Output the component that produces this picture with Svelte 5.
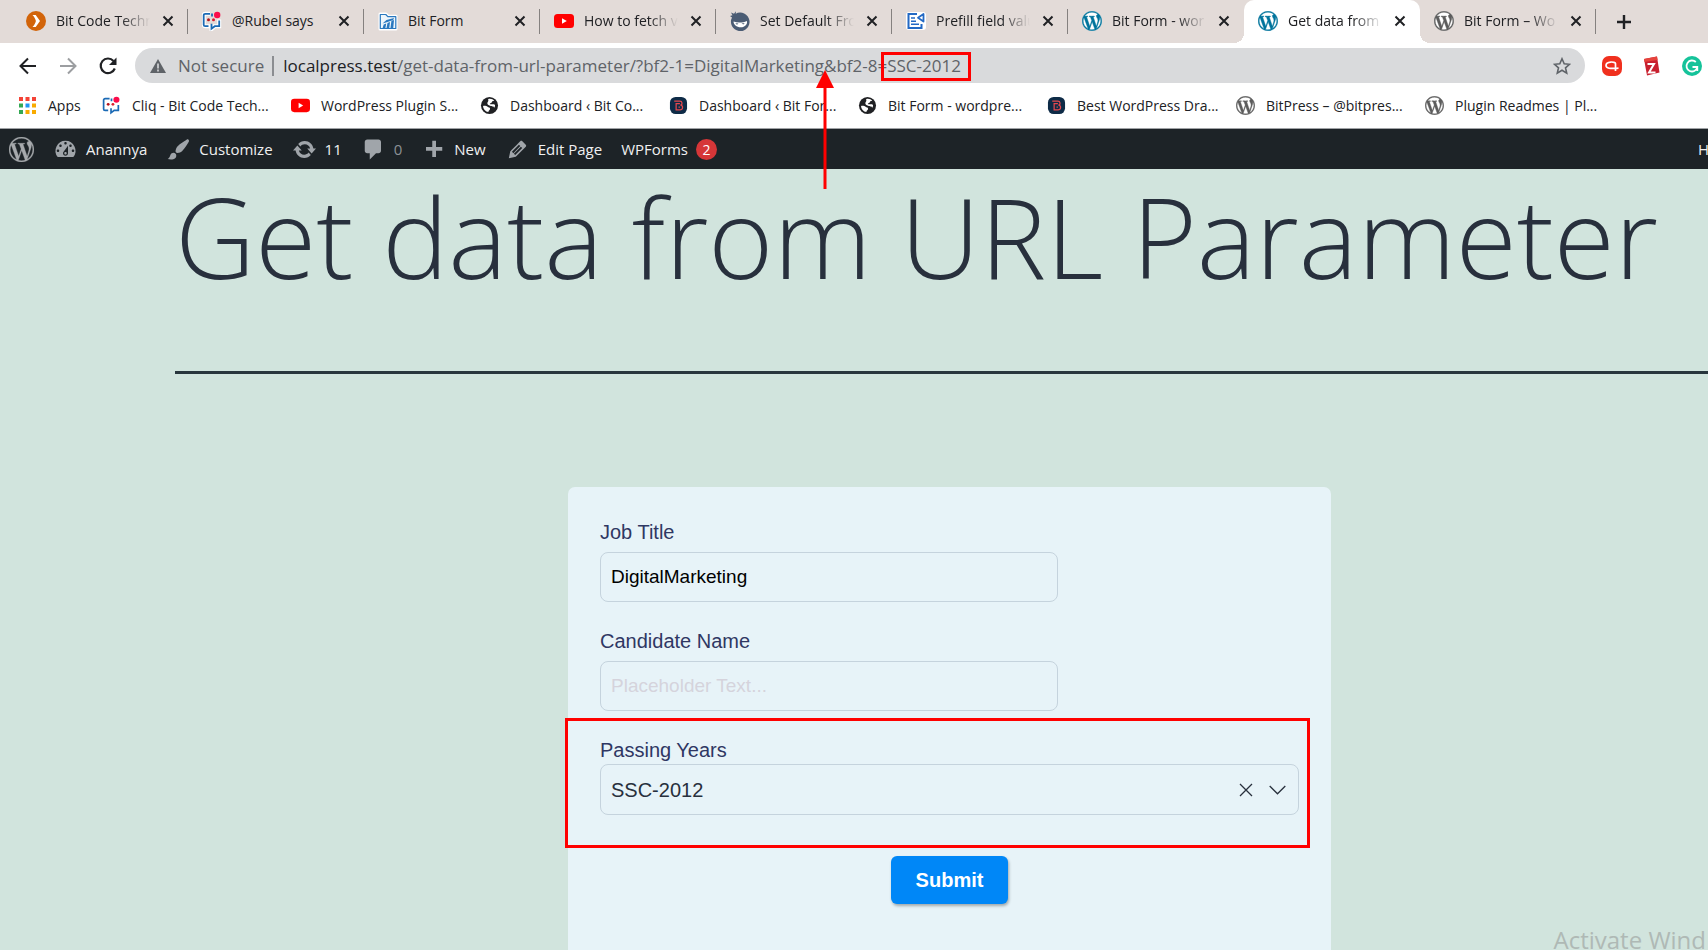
<script>
  const tabs = [
    { icon: 'arrow', label: 'Bit Code Techn', fade: true },
    { icon: 'cliq', label: '@Rubel says' },
    { icon: 'folder', label: 'Bit Form' },
    { icon: 'youtube', label: 'How to fetch v', fade: true },
    { icon: 'ninja', label: 'Set Default Fro', fade: true },
    { icon: 'prefill', label: 'Prefill field valu', fade: true },
    { icon: 'wpblue', label: 'Bit Form - wor', fade: true },
    { icon: 'wpblue', label: 'Get data from', fade: true, active: true },
    { icon: 'wpgray', label: 'Bit Form – Wo', fade: true },
  ];

  const bookmarks = [
    { icon: 'cliq', label: 'Cliq - Bit Code Tech...' },
    { icon: 'youtube', label: 'WordPress Plugin S...' },
    { icon: 'globe', label: 'Dashboard ‹ Bit Co...' },
    { icon: 'bitpress', label: 'Dashboard ‹ Bit For...' },
    { icon: 'globe', label: 'Bit Form - wordpre...' },
    { icon: 'bitpress', label: 'Best WordPress Dra...' },
    { icon: 'wpgray', label: 'BitPress – @bitpres...' },
    { icon: 'wpgray', label: 'Plugin Readmes | Pl...' },
  ];

  const dash = {
    gauge: 'M3.76 16h12.48A7.998 7.998 0 0 0 10 3a7.998 7.998 0 0 0-6.24 13zM10 4c.55 0 1 .45 1 1s-.45 1-1 1-1-.45-1-1 .45-1 1-1zM6 6c.55 0 1 .45 1 1s-.45 1-1 1-1-.45-1-1 .45-1 1-1zm8 0c.55 0 1 .45 1 1s-.45 1-1 1-1-.45-1-1 .45-1 1-1zm-5.37 5.55L12 7v6c0 1.1-.9 2-2 2s-2-.9-2-2c0-.57.24-1.08.63-1.45zM4 10c.55 0 1 .45 1 1s-.45 1-1 1-1-.45-1-1 .45-1 1-1zm12 0c.55 0 1 .45 1 1s-.45 1-1 1-1-.45-1-1 .45-1 1-1zm-5 3c0-.55-.45-1-1-1s-1 .45-1 1 .45 1 1 1 1-.45 1-1z',
    brush: 'M18.33 3.57s.27-.8-.31-1.36c-.53-.52-1.22-.24-1.22-.24-.61.3-5.76 3.47-7.67 5.57-.86.96-2.06 3.79-1.09 4.82.92.98 3.96-.17 4.79-1 2.06-2.06 5.21-7.17 5.5-7.79zM1.4 17.65c2.37-1.56 1.46-3.41 3.23-4.64.93-.65 2.22-.62 3.08.29.63.67.8 2.57-.16 3.46-1.57 1.45-4 1.55-6.15.89z',
    update: 'M10.2 3.28c3.53 0 6.43 2.61 6.92 6h2.08l-3.5 4-3.5-4h2.32c-.45-1.97-2.21-3.45-4.32-3.45-1.45 0-2.73.71-3.54 1.78L4.95 5.66C6.23 4.2 8.11 3.28 10.2 3.28zm-.4 13.44c-3.52 0-6.43-2.61-6.92-6H.8l3.5-4c1.17 1.33 2.33 2.67 3.5 4H5.48c.45 1.97 2.21 3.45 4.32 3.45 1.45 0 2.73-.71 3.54-1.78l1.71 1.95c-1.28 1.46-3.15 2.38-5.25 2.38z',
    comment: 'M5 2h9c1.1 0 2 .9 2 2v7c0 1.1-.9 2-2 2h-2l-5 5v-5H5c-1.1 0-2-.9-2-2V4c0-1.1.9-2 2-2z',
    plus: 'M17 8v3h-5v5H9v-5H4V8h5V3h3v5h5z',
    edit: 'M13.89 3.39l2.71 2.72c.46.46.42 1.24.03 1.64l-8.01 8.02-5.56 1.16 1.16-5.58s7.6-7.63 7.99-8.03c.39-.39 1.22-.39 1.68.07zm-2.73 2.79l-5.59 5.61 1.11 1.11 5.54-5.65zm-2.97 8.23l5.58-5.6-1.07-1.08-5.59 5.6z',
  };

  const adminItems = [
    { icon: 'gauge', label: 'Anannya' },
    { icon: 'brush', label: 'Customize' },
    { icon: 'update', label: '11' },
    { icon: 'comment', label: '0', dim: true },
    { icon: 'plus', label: 'New' },
    { icon: 'edit', label: 'Edit Page' },
  ];

  const wpPath =
    'M21.469 6.825c.84 1.537 1.318 3.3 1.318 5.175 0 3.979-2.156 7.456-5.363 9.325l3.295-9.527c.615-1.54.82-2.771.82-3.864 0-.405-.026-.78-.07-1.11m-7.981.105c.647-.03 1.232-.105 1.232-.105.582-.075.514-.93-.067-.899 0 0-1.755.135-2.88.135-1.064 0-2.85-.15-2.85-.15-.585-.03-.661.855-.075.885 0 0 .54.061 1.125.09l1.68 4.605-2.37 7.08L5.354 6.9c.649-.03 1.234-.1 1.234-.1.585-.075.516-.93-.065-.896 0 0-1.746.138-2.874.138-.2 0-.438-.008-.69-.015C4.911 3.15 8.235 1.215 12 1.215c2.809 0 5.365 1.072 7.286 2.833-.046-.003-.091-.009-.141-.009-1.06 0-1.812.923-1.812 1.914 0 .89.513 1.643 1.06 2.531.411.72.89 1.643.89 2.977 0 .915-.354 1.994-.821 3.479l-1.075 3.585-3.9-11.61.001.014zM12 22.784c-1.059 0-2.081-.153-3.048-.437l3.237-9.406 3.315 9.087c.024.053.05.101.078.149-1.12.393-2.325.609-3.582.609M1.211 12c0-1.564.336-3.05.935-4.39L7.29 21.709C3.694 19.96 1.212 16.271 1.211 12M12 0C5.385 0 0 5.385 0 12s5.385 12 12 12 12-5.385 12-12S18.615 0 12 0';

  const appColors = ['#f44336', '#f44336', '#f44336', '#34a853', '#2196f3', '#f9ab00', '#34a853', '#f9ab00', '#f9ab00'];

  let jobTitle = $state('DigitalMarketing');
  let candidate = $state('');
  let year = $state('SSC-2012');
</script>

{#snippet siteIcon(name)}
  <svg class="site-icon" viewBox="0 0 20 20" aria-hidden="true">
    {#if name === 'arrow'}
      <circle cx="10" cy="10" r="10" fill="#d2640a" />
      <path d="M6.500 4h3.200l4.300 6-4.300 6H6.500c1.600-1.800 2.800-3.600 3.400-6-.6-2.400-1.800-4.200-3.400-6z" fill="#fff" />
    {:else if name === 'cliq'}
      <path d="M8 2.800H3.200a1.500 1.500 0 0 0-1.500 1.500v9.400a1.500 1.500 0 0 0 1.500 1.500H8M12 15.200h-2.500v3l3.500-3h4.200V8.500" fill="none" stroke="#fff" stroke-width="4" />
      <path d="M8 2.800H3.200a1.500 1.500 0 0 0-1.500 1.500v9.400a1.500 1.500 0 0 0 1.500 1.500H6.500M9.500 12.800v4.900l3.300-2.500h4.400V9.500M10 2.600v2.800" fill="none" stroke="#1b6ab5" stroke-width="1.800" />
      <circle cx="6.500" cy="8.800" r="1.500" fill="#b5121b" />
      <circle cx="11.500" cy="8.800" r="1.500" fill="#d81e2c" />
      <circle cx="15.200" cy="4" r="3.200" fill="#fb0c4b" />
    {:else if name === 'folder'}
      <path d="M2 3h6l2 2.200h8V18H2z" fill="#fff" stroke="#fff" stroke-width="3" stroke-linejoin="round" />
      <path d="M2.300 17.500V3.500h5.500l2 2.200h8V17.500z" fill="#eef6fc" stroke="#2a78bf" stroke-width="1.200" stroke-linejoin="round" />
      <path d="M4.500 17.500l1.200-4 2.500-1-.9 5zM8.400 17.500l1.100-5.500 2.500-1-.8 6.500zM12.400 17.500l1-7.500 2.600-1-.8 8.500zM4.500 12.500l4-3.500 7.500-2-.8 2L9.500 11z" fill="#2a78bf" />
    {:else if name === 'youtube'}
      <rect x="0" y="3" width="20" height="14" rx="3.500" fill="#f00" />
      <path d="M8 7.200v5.600l4.800-2.800z" fill="#fff" />
    {:else if name === 'ninja'}
      <path d="M1 1.500l3 1.200L6 .2l-.3 2.500A9.300 9.300 0 1 1 2 6.500L0 5l2.500-.8z" fill="#4b5c74" />
      <path d="M3.600 10.400c3.800 1.500 9 1.500 13.200-.5 1.200 2.800-1.800 6.300-6 6.300s-7.600-3-7.200-5.800z" fill="#fff" />
      <path d="M5.300 12.200l3.200.2-1.500 1.300zM11.500 12.400l3.200-.5-1.300 1.600z" fill="#4b5c74" />
    {:else if name === 'prefill'}
      <rect x="0" y="1" width="20" height="18" rx="3" fill="#fff" />
      <path d="M11 3H2.500v14h13v-4" fill="none" stroke="#2369c4" stroke-width="2" />
      <path d="M5 7h4M5 10.200h5M5 13.200h8" stroke="#2369c4" stroke-width="1.600" />
      <path d="M17.500 3v7.500L12 6.800z" fill="#fff" stroke="#2369c4" stroke-width="1.800" stroke-linejoin="round" />
    {:else if name === 'globe'}
      <circle cx="10" cy="10" r="9" fill="#202124" />
      <path d="M3.200 10.500c1-.6 3.500-.5 4.800.8.900.9 2.600.5 2.600 2 0 1.600-1.700 1.400-1.800 3.600-3-.4-5.400-3-5.600-6.400zM8.500 3.300c2.500-.8 5.300.2 6.500 1.700-1 .3-2 .1-2.400 1.200-.5 1.300-2 1-2.300 2.200 1.500.8 3.700-.4 5 .6 1.200 1 .3 2.800-.7 3.700.8-2.300-1.600-1.500-3.300-2.300-1.700-.7-3.700-.8-3.600-2.700.1-1.800 1.800-2.500.8-4.400z" fill="#fff" />
    {:else if name === 'bitpress'}
      <rect x="1" y="1" width="18" height="18" rx="6" fill="#0e2b47" />
      <path d="M5.500 5.500h5.800c3 0 3.200 3.600.8 4.200 3.200.5 2.800 5-.6 5H7.500V8h4M10 11.800h1.500" fill="none" stroke="#e5484d" stroke-width="1.300" />
    {:else}
      <circle cx="10" cy="10" r="10" fill="#fff" />
      <path d={wpPath} transform="translate(.2 .2) scale(.816)" fill={name === 'wpblue' ? '#00749c' : '#5c5c5c'} stroke={name === 'wpblue' ? '#00749c' : '#5c5c5c'} stroke-width=".5" />
    {/if}
  </svg>
{/snippet}

<div class="window">
  <nav class="tabstrip" aria-label="Tabs">
    {#each tabs as tab}
      <div class="tab" class:active={tab.active}>
        {@render siteIcon(tab.icon)}
        <span class="tab-label" class:fade={tab.fade}>{tab.label}</span>
        <button class="plain" aria-label="Close tab">
          <svg width="12" height="12" viewBox="0 0 12 12"><path d="M1.500 1.500l9 9M10.500 1.500l-9 9" stroke="#202124" stroke-width="2" /></svg>
        </button>
      </div>
    {/each}
    <button class="plain new-tab" aria-label="New tab">
      <svg width="16" height="16" viewBox="0 0 16 16"><path d="M8 1v14M1 8h14" stroke="#202124" stroke-width="2.400" /></svg>
    </button>
  </nav>

  <div class="toolbar">
    <div class="nav-buttons">
      <button class="plain" aria-label="Back">
        <svg width="20" height="20" viewBox="0 0 20 20"><path d="M18 10H3M10 2.500L2.500 10l7.500 7.500" fill="none" stroke="#202124" stroke-width="2" /></svg>
      </button>
      <button class="plain" aria-label="Forward">
        <svg width="20" height="20" viewBox="0 0 20 20"><path d="M2 10h15M10 2.500l7.500 7.500-7.500 7.500" fill="none" stroke="#9c9ea1" stroke-width="2" /></svg>
      </button>
      <button class="plain" aria-label="Reload">
        <svg width="20" height="20" viewBox="0 0 20 20"><path d="M16.800 12.500A7.300 7.300 0 1 1 15.500 5" fill="none" stroke="#202124" stroke-width="2.200" /><path d="M18.500 1.500V9H11z" fill="#202124" /></svg>
      </button>
    </div>
    <div class="address">
      <svg width="16" height="16" viewBox="0 0 16 16" aria-hidden="true"><path d="M8 1l8 14H0z" fill="#5f6368" /><path d="M8 5.500v5M8 11.500v2" stroke="#d9dadc" stroke-width="1.600" /></svg>
      <span class="insecure">Not secure</span>
      <span class="url"><b>localpress.test</b>/get-data-from-url-parameter/?bf2-1=DigitalMarketing&amp;bf2-8=<mark>SSC-2012</mark></span>
      <button class="plain star" aria-label="Bookmark this page">
        <svg width="18" height="18" viewBox="0 0 18 18"><path d="M9 1.800l2.200 5 5.300.5-4 3.500 1.200 5.300L9 13.300l-4.700 2.800 1.200-5.300-4-3.500 5.300-.5z" fill="none" stroke="#5f6368" stroke-width="1.600" /></svg>
      </button>
    </div>
    <div class="extensions">
      <svg width="20" height="20" viewBox="0 0 20 20" aria-hidden="true">
        <rect width="20" height="20" rx="7" fill="#f0301e" />
        <path d="M13.500 15V7.500C13.500 5.500 4 5 4 9.300c0 4 6 3.200 12.500 2.900" fill="none" stroke="#fff" stroke-width="1.700" />
      </svg>
      <svg width="20" height="20" viewBox="0 0 20 20" aria-hidden="true">
        <path d="M2 3l13-2.500 2.500 16L5 19.500z" fill="#c8202f" /><path d="M2 3l13-2.500.5 3.500L2.500 6z" fill="#e6433c" />
        <path d="M5.500 8h6.500l-5 8.500h6.500" fill="none" stroke="#fff" stroke-width="2" />
      </svg>
      <svg width="20" height="20" viewBox="0 0 20 20" aria-hidden="true">
        <circle cx="10" cy="10" r="10" fill="#15c39a" />
        <path d="M13.800 6A5.500 5.500 0 1 0 15.300 11.500M10.500 11h4.800v4" fill="none" stroke="#fff" stroke-width="1.800" />
      </svg>
    </div>
  </div>

  <nav class="bookmarks" aria-label="Bookmarks">
    <a class="apps" href="#apps">
      <svg width="17" height="17" viewBox="0 0 17 17" aria-hidden="true">
        {#each appColors as color, i}
          <rect x={(i % 3) * 6.5} y={Math.floor(i / 3) * 6.5} width="4" height="4" fill={color} />
        {/each}
      </svg>
      Apps
    </a>
    {#each bookmarks as mark}
      <a href="#bookmark">{@render siteIcon(mark.icon)}{mark.label}</a>
    {/each}
  </nav>

  <nav class="adminbar" aria-label="Admin">
    <a href="#about" aria-label="About WordPress">
      <svg width="25" height="25" viewBox="0 0 24 24"><path d={wpPath} fill="#a7aaad" stroke="#a7aaad" stroke-width=".3" /></svg>
    </a>
    {#each adminItems as item}
      <a href="#admin" class:dim={item.dim}>
        <svg width="25" height="25" viewBox="0 0 20 20" aria-hidden="true"><path d={dash[item.icon]} fill="#a0a5aa" fill-rule="evenodd" /></svg>
        {item.label}
      </a>
    {/each}
    <a href="#wpforms">WPForms <span class="badge">2</span></a>
    <a class="howdy" href="#account">H</a>
  </nav>

  <main>
    <header>
      <h1>Get data from URL Parameter</h1>
    </header>

    <form class="card" onsubmit={(e) => e.preventDefault()}>
      <div class="field">
        <label for="job">Job Title</label>
        <input id="job" type="text" bind:value={jobTitle} />
      </div>
      <div class="field">
        <label for="name">Candidate Name</label>
        <input id="name" type="text" placeholder="Placeholder Text..." bind:value={candidate} />
      </div>
      <div class="field highlighted">
        <label for="year">Passing Years</label>
        <div class="select-box">
          <select id="year" bind:value={year}>
            <option>SSC-2012</option>
          </select>
          <span class="select-icons">
            <button type="button" class="plain" aria-label="Clear" onclick={() => (year = '')}>
              <svg width="14" height="14" viewBox="0 0 14 14"><path d="M1 1l12 12M13 1L1 13" stroke="#28303d" stroke-width="1.300" /></svg>
            </button>
            <svg width="17" height="10" viewBox="0 0 17 10" aria-hidden="true"><path d="M.7 1l7.800 7.800L16.300 1" fill="none" stroke="#28303d" stroke-width="1.300" /></svg>
          </span>
        </div>
      </div>
      <button class="submit" type="submit">Submit</button>
    </form>
  </main>

  <svg class="pointer" width="18" height="119" viewBox="0 0 18 119" aria-hidden="true">
    <path d="M9 12v107" stroke="#f00" stroke-width="3" /><path d="M9 0l9 18H0z" fill="#f00" />
  </svg>
  <div class="watermark">Activate Wind</div>
</div>

<style>
  :global(body) {
    margin: 0;
  }
  .window {
    position: relative;
    display: flex;
    flex-direction: column;
    height: 100vh;
    overflow: hidden;
    background: #d1e4dd;
    color: #202124;
    font-family: 'Open Sans', 'Noto Sans', sans-serif;
    font-size: 14px;
  }
  .window * {
    box-sizing: border-box;
  }
  svg {
    display: block;
    flex: none;
  }
  a {
    color: inherit;
    text-decoration: none;
  }
  .plain {
    padding: 0;
    border: 0;
    background: none;
  }
  .site-icon {
    width: 20px;
    height: 20px;
  }

  .tabstrip {
    display: flex;
    align-items: center;
    height: 43px;
    padding-left: 12px;
    background: #e3dbd8;
  }
  .tab {
    position: relative;
    display: flex;
    align-items: center;
    gap: 10px;
    flex: 0 1 176px;
    min-width: 0;
    height: 100%;
    padding: 0 14px 2px;
  }
  .tab::after {
    content: '';
    position: absolute;
    right: 0;
    top: 9px;
    width: 1px;
    height: 25px;
    background: #85817f;
  }
  .tab.active {
    border-radius: 10px 10px 0 0;
    background: #fff;
  }
  .tab:has(+ .active)::after {
    display: none;
  }
  .tab.active::before,
  .tab.active::after {
    content: '';
    position: absolute;
    top: auto;
    bottom: 0;
    width: 10px;
    height: 10px;
  }
  .tab.active::before {
    left: -10px;
    background: radial-gradient(circle at 0 0, transparent 10px, #fff 10px);
  }
  .tab.active::after {
    right: -10px;
    background: radial-gradient(circle at 100% 0, transparent 10px, #fff 10px);
  }
  .tab-label {
    flex: 1;
    overflow: hidden;
    white-space: nowrap;
  }
  .tab-label.fade {
    mask-image: linear-gradient(to right, #000 68%, transparent 98%);
  }
  .new-tab {
    margin-left: 20px;
  }

  .toolbar {
    display: flex;
    align-items: center;
    gap: 17px;
    height: 45px;
    padding: 0 6px 0 18px;
    background: #fff;
  }
  .nav-buttons,
  .extensions {
    display: flex;
    gap: 20px;
  }
  .address {
    display: flex;
    align-items: center;
    flex: 1;
    min-width: 0;
    height: 35px;
    padding: 0 14px 0 15px;
    border-radius: 18px;
    background: #d9dadc;
    color: #5f6368;
    font-size: 17px;
    white-space: nowrap;
  }
  .insecure {
    margin: 0 9px 0 12px;
    padding-right: 8px;
    line-height: 20px;
    border-right: 2px solid #8b8d91;
  }
  .url b {
    color: #202124;
    font-weight: 400;
  }
  .url mark {
    position: relative;
    background: none;
    color: inherit;
  }
  .url mark::after {
    content: '';
    position: absolute;
    inset: -2px -10px -4px -6px;
    border: 3px solid #f00;
  }
  .star {
    margin-left: auto;
  }

  .bookmarks {
    display: flex;
    align-items: center;
    height: 41px;
    padding: 0 0 5px 19px;
    border-bottom: 1px solid #a0a3a6;
    background: #fff;
    white-space: nowrap;
  }
  .bookmarks a {
    display: flex;
    align-items: center;
    gap: 11px;
    flex: 0 0 189px;
  }
  .bookmarks .apps {
    flex-basis: 83px;
    gap: 12px;
  }
  .bookmarks .site-icon {
    width: 19px;
    height: 19px;
  }

  .adminbar {
    display: flex;
    align-items: center;
    gap: 19px;
    height: 40px;
    padding-left: 9px;
    background: #1d2327;
    color: #f0f0f1;
    font-size: 15px;
    line-height: 22px;
    white-space: nowrap;
  }
  .adminbar a {
    display: flex;
    align-items: center;
    gap: 8px;
  }
  .adminbar .dim {
    color: #8c9095;
  }
  .badge {
    width: 21px;
    border-radius: 50%;
    background: #d63638;
    color: #fff;
    font-size: 14px;
    line-height: 21px;
    text-align: center;
  }
  .adminbar .howdy {
    width: 10px;
    margin-left: auto;
  }

  main {
    display: flex;
    flex-direction: column;
    flex: 1;
    min-height: 0;
    padding-left: 175px;
  }
  header {
    height: 205px;
    flex: none;
    border-bottom: 3px solid #28363d;
  }
  h1 {
    margin: 0;
    color: #28303d;
    font-size: 111px;
    font-weight: 300;
    line-height: 134px;
    white-space: nowrap;
  }
  .card {
    display: flex;
    flex-direction: column;
    gap: 27px;
    flex: 1 0 auto;
    width: 763px;
    max-width: 100%;
    margin: 113px 0 0 393px;
    padding: 33px 32px;
    border-radius: 7px 7px 0 0;
    background: #e7f3f8;
    color: #2f3763;
    font-family: 'Liberation Sans', Arial, sans-serif;
    font-size: 20px;
    line-height: 24px;
  }
  .field {
    display: flex;
    flex-direction: column;
    gap: 8px;
  }
  input,
  select {
    width: 100%;
    height: 50px;
    padding: 0 10px;
    border: 1px solid #c5d3dd;
    border-radius: 8px;
    background: transparent;
    color: #000;
    font-family: inherit;
    font-size: 19px;
  }
  input {
    max-width: 458px;
  }
  input::placeholder {
    color: #d5d3dc;
  }
  .highlighted {
    position: relative;
    gap: 2px;
  }
  .highlighted::after {
    content: '';
    position: absolute;
    inset: -20px -11px -33px -35px;
    border: 3px solid #f00;
    pointer-events: none;
  }
  .select-box {
    position: relative;
  }
  select {
    display: block;
    height: 51px;
    color: #28303d;
    font-size: 20px;
    appearance: none;
  }
  .select-icons {
    position: absolute;
    top: 0;
    right: 13px;
    bottom: 0;
    display: flex;
    align-items: center;
    gap: 16px;
  }
  .submit {
    align-self: center;
    width: 117px;
    height: 48px;
    margin-top: 14px;
    border: 0;
    border-radius: 6px;
    background: #0087f7;
    box-shadow: 1px 2px 3px rgba(0, 0, 0, 0.3);
    color: #fff;
    font-family: inherit;
    font-size: 20px;
    font-weight: 700;
  }

  .pointer {
    position: absolute;
    top: 70px;
    left: 816px;
  }
  .watermark {
    position: absolute;
    right: 2px;
    bottom: -6px;
    color: #afb9b5;
    font-size: 24px;
    line-height: 32px;
  }
</style>
